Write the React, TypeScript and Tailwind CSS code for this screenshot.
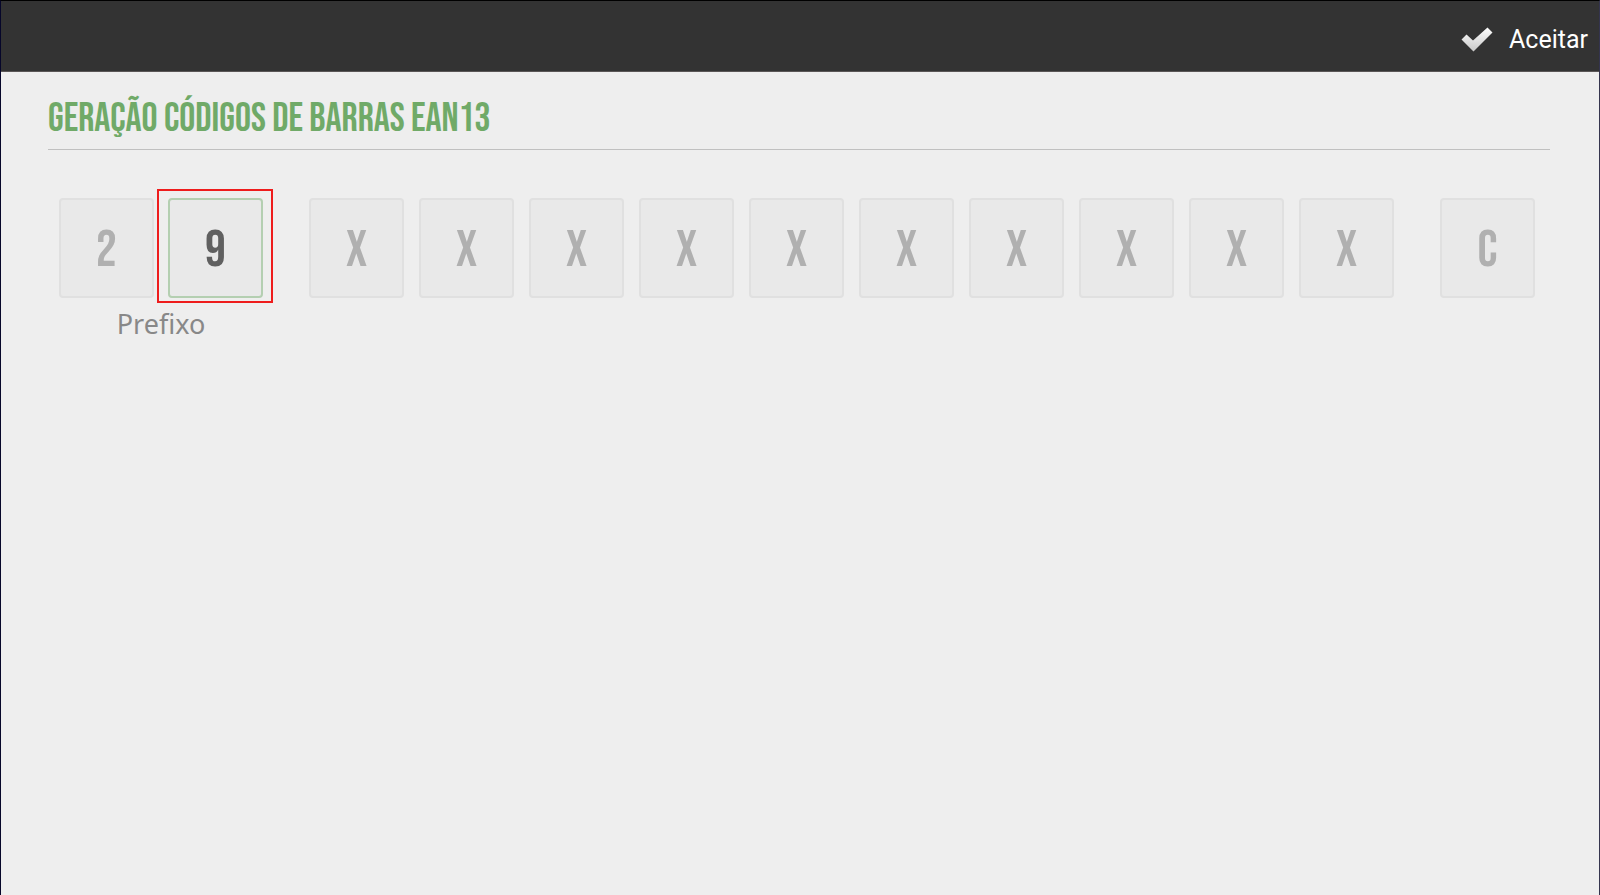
import { useState } from 'react';

const condensed =
  "font-['Bebas_Neue','Roboto_Condensed','Open_Sans_Condensed','Liberation_Sans_Narrow','Liberation_Sans',sans-serif]";

type DigitProps = {
  label: string;
  value: string;
  active?: boolean;
  onChange?: (value: string) => void;
};

function Digit({ label, value, active = false, onChange }: DigitProps) {
  const tone = active ? 'border-[#b4cfb1] text-[#606060]' : 'border-[#e0e0e0] text-[#b0b0b0]';
  return (
    <input
      type="text"
      aria-label={label}
      value={value}
      maxLength={1}
      readOnly={!active}
      onChange={(event) => onChange?.(event.target.value)}
      className={`${condensed} ${tone} block h-[100px] w-full min-w-0 rounded border-2 bg-[#e9e9e9] pt-1 text-center text-[52px] font-normal outline-none`}
    />
  );
}

function AcceptIcon() {
  return (
    <svg viewBox="0 0 32 25" className="h-[25px] w-8" aria-hidden="true">
      <defs>
        <linearGradient id="accept-fill" x1="0" y1="0" x2="0" y2="1">
          <stop offset="0" stopColor="#ffffff" />
          <stop offset="1" stopColor="#c8c8c8" />
        </linearGradient>
      </defs>
      <path d="M0.5 12.5 5.5 7.5 12 13.5 26.5 0.5 31.5 5.5 12.5 24.5Z" fill="url(#accept-fill)" />
    </svg>
  );
}

const itemPositions = [3, 4, 5, 6, 7, 8, 9, 10, 11, 12];

export default function App() {
  const [prefix, setPrefix] = useState('9');

  return (
    <div className="flex min-h-screen flex-col border-t border-r border-l border-t-black border-r-[#34344e] border-l-[#06062a] bg-[#eeeeee]">
      <header className="flex h-[71px] items-center justify-end border-b border-[#5a5656] bg-[#333333] pt-[7px] pr-[11px]">
        <button
          type="button"
          className="flex items-center gap-4 font-['Roboto',sans-serif] text-[25px] leading-8 text-white"
        >
          <AcceptIcon />
          Aceitar
        </button>
      </header>

      <main className="pt-[21px] pr-[49px] pl-[47px]">
        <h1
          className={`${condensed} border-b border-[#c0c0c0] pb-[3px] text-[40px] leading-[53px] font-normal whitespace-nowrap text-[#70aa68]`}
        >
          GERAÇÃO CÓDIGOS DE BARRAS EAN13
        </h1>

        <div className="flex items-start gap-[46px] pt-12 pr-[15px] pl-[11px]">
          <div className="min-w-0 flex-[204_1_0]">
            <div className="flex gap-[14px]">
              <div className="min-w-0 flex-1">
                <Digit label="Prefixo, dígito 1" value="2" />
              </div>
              <div className="relative min-w-0 flex-1">
                <Digit label="Prefixo, dígito 2" value={prefix} active onChange={setPrefix} />
                <span className="pointer-events-none absolute -top-[9px] -right-[10px] -bottom-[5px] -left-[11px] border-2 border-[#ee1c1c]" />
              </div>
            </div>
            <p className="pt-2 text-center font-['Noto_Sans',sans-serif] text-[27px] leading-9 text-[#888888]">
              Prefixo
            </p>
          </div>

          <div className="flex min-w-0 flex-[1085_1_0] gap-[15px]">
            {itemPositions.map((position) => (
              <div key={position} className="min-w-0 flex-1">
                <Digit label={`Dígito ${position}`} value="X" />
              </div>
            ))}
          </div>

          <div className="min-w-0 flex-[95_1_0]">
            <Digit label="Dígito de controlo" value="C" />
          </div>
        </div>
      </main>
    </div>
  );
}
